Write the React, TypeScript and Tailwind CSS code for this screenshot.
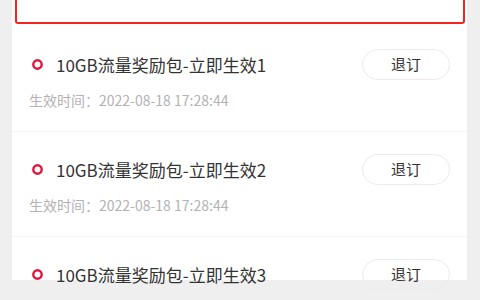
const orders = [
  { id: 1, name: "10GB流量奖励包-立即生效1", time: "2022-08-18 17:28:44" },
  { id: 2, name: "10GB流量奖励包-立即生效2", time: "2022-08-18 17:28:44" },
  { id: 3, name: "10GB流量奖励包-立即生效3", time: "2022-08-18 17:28:44" },
];

const RingIcon = () => (
  <svg width="11" height="11" viewBox="0 0 11 11" className="shrink-0">
    <circle cx="5.5" cy="5.5" r="4.2" fill="none" stroke="#e0163d" strokeWidth="2.4" />
  </svg>
);

const OrderItem = ({ name, time }: { name: string; time: string }) => (
  <li className="border-b border-[#f3f3f3] pb-[21px] pl-[17px] pr-[17px] pt-[22px]">
    <div className="flex h-[31px] items-center justify-between">
      <div className="flex items-center gap-[13px] pl-[3px]">
        <RingIcon />
        <span className="text-[17px] leading-[24px] text-[#333]">{name}</span>
      </div>
      <button className="h-[31px] w-[88px] rounded-full border border-[#ebebeb] text-[15px] text-[#333]">
        退订
      </button>
    </div>
    <p className="mt-[10px] text-[14px] leading-[20px] text-[#b2b2b2]">生效时间：{time}</p>
  </li>
);

export default function App() {
  return (
    <div
      className="h-[300px] w-[480px] overflow-hidden bg-[#efefef] px-[12px] pr-[13px]"
      style={{ fontFamily: '"Noto Sans CJK SC", "Noto Sans", sans-serif' }}
    >
      <div className="h-full bg-white pl-[3px] pr-[2px]">
        <div className="-mt-[20px] h-[44px] rounded-[3px] border-2 border-[#f3261d] bg-white" />
        <ul className="mt-[3px] pr-0 -mr-[2px] -ml-[3px]">
          {orders.map((o) => (
            <OrderItem key={o.id} name={o.name} time={o.time} />
          ))}
        </ul>
      </div>
    </div>
  );
}
